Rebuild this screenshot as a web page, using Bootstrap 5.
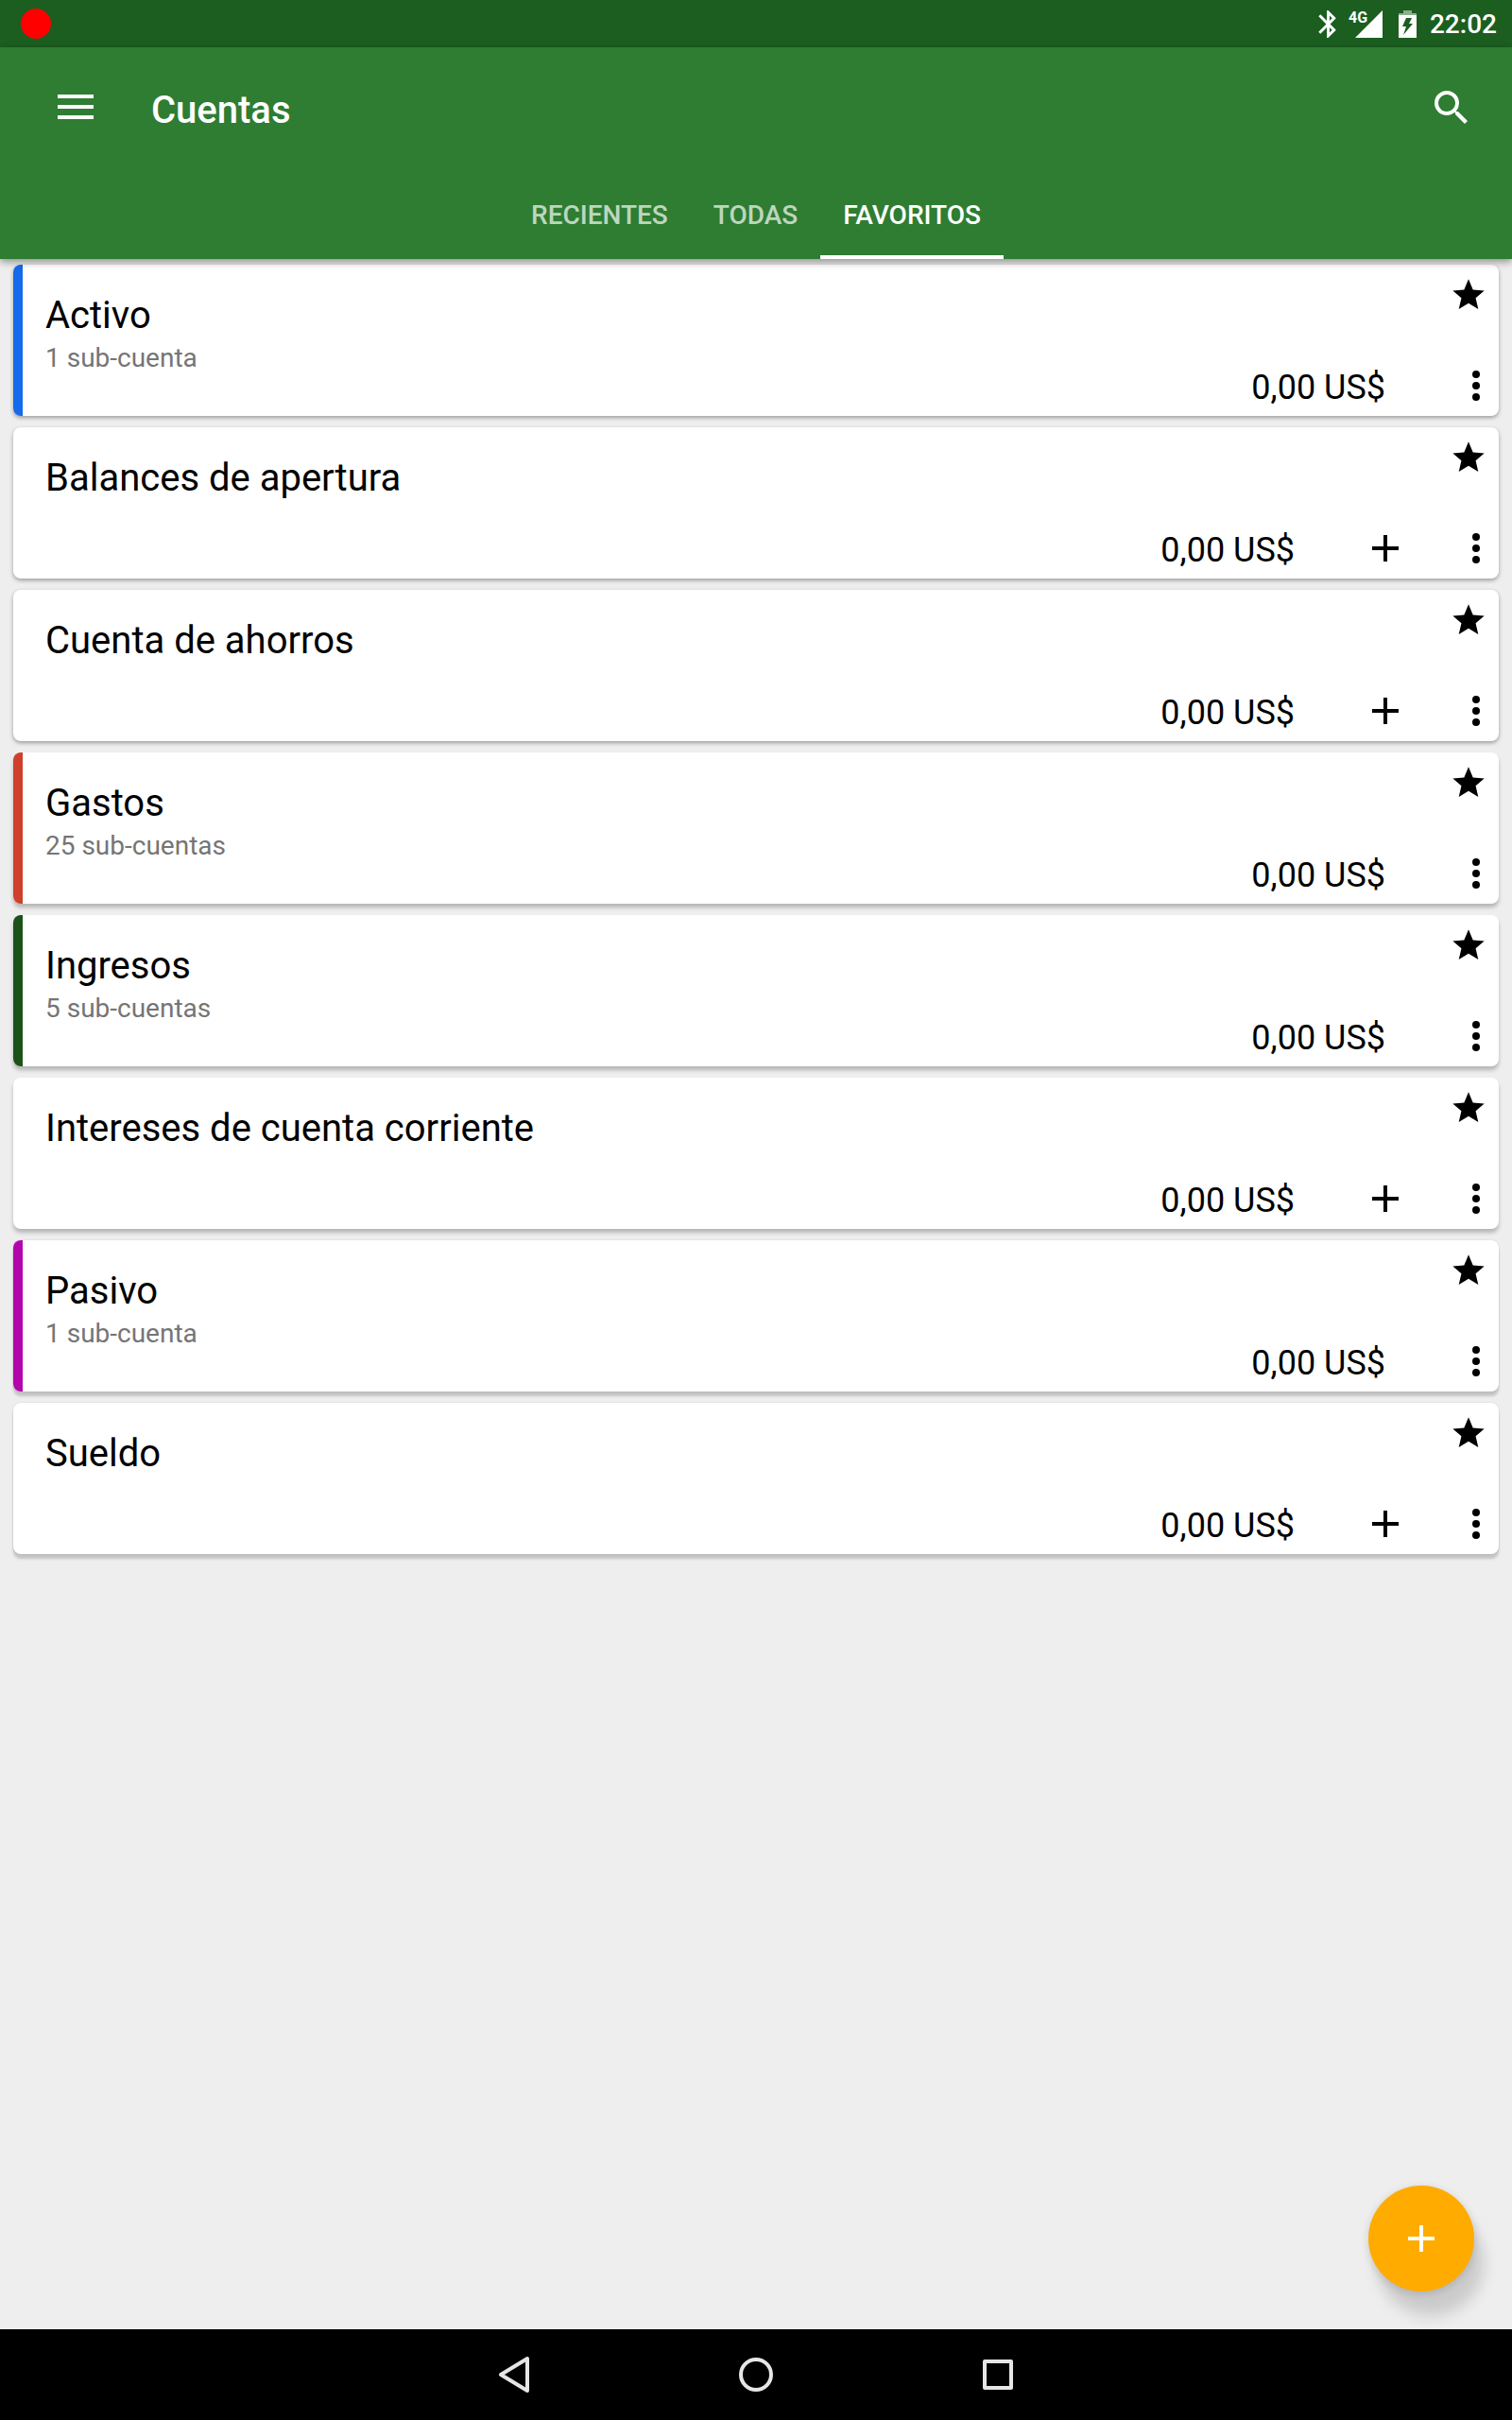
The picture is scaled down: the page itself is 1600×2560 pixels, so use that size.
<!DOCTYPE html>
<html lang="es">
<head>
<meta charset="utf-8">
<meta name="viewport" content="width=device-width, initial-scale=1">
<title>Cuentas</title>
<link href="https://cdn.jsdelivr.net/npm/bootstrap@5.3.0/dist/css/bootstrap.min.css" rel="stylesheet">
<style>
  body { font-family: Roboto, "Noto Sans", sans-serif; background: #eeeeee; color: #000; }
  svg { display: block; fill: currentColor; flex-shrink: 0; }
  .btn-plain { background: none; border: 0; padding: 0; color: inherit; display: block; }

  .status-bar { height: 50px; background: #1b5e20; color: #fff; padding: 0 16px 0 22px; }
  .rec-dot { width: 32px; height: 32px; background: #f00; }
  .clock { font-size: 28px; font-weight: 500; line-height: 50px; padding-top: 2px; margin-left: 14px; }
  .signal { width: 36px; margin: 0 17px 0 4px; }
  .signal-label { position: absolute; left: 0; top: 0; font-size: 16px; font-weight: 700; line-height: 15px; }

  .app-bar { background: #2e7d32; color: #fff; box-shadow: 0 3px 8px rgba(0,0,0,.4); z-index: 2; }
  .app-toolbar { height: 128px; padding: 0 40px 0 56px; }
  .app-title { font-size: 40px; font-weight: 500; line-height: 48px; margin: 6px 0 0 56px; }
  .app-tabs .nav-link { color: rgba(255,255,255,.7); font-size: 28px; font-weight: 500; line-height: 32px; padding: 34px 24px 26px; border: 0; border-bottom: 4px solid transparent; border-radius: 0; background: none; }
  .app-tabs .nav-link.active { color: #fff; border-color: #fff; background: none; }

  .account-list { padding: 6px 14px 12px; gap: 12px; }
  .account { min-height: 160px; border-radius: 8px; background: #fff; box-shadow: 0 2px 4px rgba(0,0,0,.35); }
  .account:nth-child(n+4) { box-shadow: 0 4px 4px rgba(0,0,0,.24); }
  .account:nth-child(n+7) { box-shadow: 0 5px 3px rgba(0,0,0,.18), 0 0 2px rgba(0,0,0,.14); }
  .account-stripe { width: 10px; border-radius: 8px 0 0 8px; }
  .account-body { padding: 28px 0 0 24px; }
  .account-name { font-size: 40px; font-weight: 400; line-height: 52px; margin: 0; }
  .account-sub { font-size: 28px; line-height: 38px; margin: 0; color: #757575; }
  .account-side { padding: 12px 0 6px; }
  .account-star { margin-right: 12px; }
  .account-amount { font-size: 36px; line-height: 48px; margin-right: 72px; padding-top: 4px; }
  .account-add { margin-right: 48px; }
  .stripe-blue { background: #1569eb; }
  .stripe-red { background: #d03f2b; }
  .stripe-green { background: #1c5117; }
  .stripe-purple { background: #b305ae; }

  .fab { position: absolute; right: 40px; bottom: 40px; width: 112px; height: 112px; background: #ffab00; color: #fff; box-shadow: 10px 26px 16px rgba(0,0,0,.15), 0 2px 10px rgba(0,0,0,.14); }
  .system-nav { height: 96px; background: #000; color: #e6e6e6; z-index: 2; }
  .system-nav .btn-plain { width: 256px; height: 96px; }
  .system-nav svg { fill: none; stroke: currentColor; stroke-width: 4; stroke-linejoin: round; }
</style>
</head>
<body class="d-flex flex-column min-vh-100">

<svg class="d-none" aria-hidden="true">
  <symbol id="i-star" viewBox="0 0 24 24"><path d="M12 17.27 18.18 21l-1.64-7.03L22 9.24l-7.19-.61L12 2 9.19 8.63 2 9.24l5.46 4.73L5.82 21z"/></symbol>
  <symbol id="i-more" viewBox="0 0 24 24"><circle cx="12" cy="6" r="2"/><circle cx="12" cy="12" r="2"/><circle cx="12" cy="18" r="2"/></symbol>
  <symbol id="i-add" viewBox="0 0 24 24"><path d="M19 13h-6v6h-2v-6H5v-2h6V5h2v6h6z"/></symbol>
</svg>

<div class="status-bar d-flex align-items-center">
  <span class="rec-dot rounded-circle me-auto"></span>
  <svg width="35" height="35" viewBox="0 0 24 24" aria-label="Bluetooth"><path d="M17.71 7.71 12 2h-1v7.59L6.41 5 5 6.41 10.59 12 5 17.59 6.41 19 11 14.41V22h1l5.71-5.71-4.3-4.29zM13 5.83l1.88 1.88L13 9.59zm1.88 10.46L13 18.17v-3.76z"/></svg>
  <div class="signal position-relative">
    <svg width="36" height="29" viewBox="0 0 36 29" aria-hidden="true"><path d="M36 0v29H7z"/></svg>
    <span class="signal-label">4G</span>
  </div>
  <svg width="19" height="29" viewBox="0 0 19 29" aria-label="Cargando"><path opacity=".5" d="M5 0h9v3h5v3H0V3h5z"/><path fill-rule="evenodd" d="M0 5h19v24H0zM8 8 4 17h4l-3 9L15 14h-4l3-6z"/></svg>
  <span class="clock">22:02</span>
</div>

<header class="app-bar position-relative">
  <div class="app-toolbar d-flex align-items-center">
    <button class="btn-plain" type="button" aria-label="Menú"><svg width="48" height="48" viewBox="0 0 48 48"><path d="M5 10h38v4H5zM5 21h38v4H5zM5 32h38v4H5z"/></svg></button>
    <h1 class="app-title">Cuentas</h1>
    <button class="btn-plain ms-auto" type="button" aria-label="Buscar"><svg width="48" height="48" viewBox="0 0 24 24"><path d="M15.5 14h-.79l-.28-.27A6.47 6.47 0 0 0 16 9.5 6.5 6.5 0 1 0 9.500 16c1.610 0 3.090-.59 4.230-1.570l.27.28v.79l5 4.990L20.490 19zm-6 0C7.010 14 5 11.990 5 9.500S7.010 5 9.500 5 14 7.010 14 9.500 11.990 14 9.500 14z"/></svg></button>
  </div>
  <nav class="app-tabs nav justify-content-center">
    <a class="nav-link" href="#recientes">RECIENTES</a>
    <a class="nav-link" href="#todas">TODAS</a>
    <a class="nav-link active" aria-current="page" href="#favoritos">FAVORITOS</a>
  </nav>
</header>

<main class="position-relative flex-grow-1">
  <div class="account-list d-flex flex-column" id="favoritos">

    <article class="account d-flex">
      <span class="account-stripe stripe-blue"></span>
      <div class="account-body flex-grow-1"><h2 class="account-name">Activo</h2><p class="account-sub">1 sub-cuenta</p></div>
      <div class="account-side d-flex flex-column justify-content-between align-items-end">
        <button class="btn-plain account-star" type="button" aria-label="Favorito"><svg width="40" height="40"><use href="#i-star"/></svg></button>
        <div class="d-flex align-items-center">
          <span class="account-amount">0,00 US$</span>
          <button class="btn-plain" type="button" aria-label="Más opciones"><svg width="48" height="48"><use href="#i-more"/></svg></button>
        </div>
      </div>
    </article>

    <article class="account d-flex">
      <span class="account-stripe"></span>
      <div class="account-body flex-grow-1"><h2 class="account-name">Balances de apertura</h2></div>
      <div class="account-side d-flex flex-column justify-content-between align-items-end">
        <button class="btn-plain account-star" type="button" aria-label="Favorito"><svg width="40" height="40"><use href="#i-star"/></svg></button>
        <div class="d-flex align-items-center">
          <span class="account-amount">0,00 US$</span>
          <button class="btn-plain account-add" type="button" aria-label="Añadir"><svg width="48" height="48"><use href="#i-add"/></svg></button>
          <button class="btn-plain" type="button" aria-label="Más opciones"><svg width="48" height="48"><use href="#i-more"/></svg></button>
        </div>
      </div>
    </article>

    <article class="account d-flex">
      <span class="account-stripe"></span>
      <div class="account-body flex-grow-1"><h2 class="account-name">Cuenta de ahorros</h2></div>
      <div class="account-side d-flex flex-column justify-content-between align-items-end">
        <button class="btn-plain account-star" type="button" aria-label="Favorito"><svg width="40" height="40"><use href="#i-star"/></svg></button>
        <div class="d-flex align-items-center">
          <span class="account-amount">0,00 US$</span>
          <button class="btn-plain account-add" type="button" aria-label="Añadir"><svg width="48" height="48"><use href="#i-add"/></svg></button>
          <button class="btn-plain" type="button" aria-label="Más opciones"><svg width="48" height="48"><use href="#i-more"/></svg></button>
        </div>
      </div>
    </article>

    <article class="account d-flex">
      <span class="account-stripe stripe-red"></span>
      <div class="account-body flex-grow-1"><h2 class="account-name">Gastos</h2><p class="account-sub">25 sub-cuentas</p></div>
      <div class="account-side d-flex flex-column justify-content-between align-items-end">
        <button class="btn-plain account-star" type="button" aria-label="Favorito"><svg width="40" height="40"><use href="#i-star"/></svg></button>
        <div class="d-flex align-items-center">
          <span class="account-amount">0,00 US$</span>
          <button class="btn-plain" type="button" aria-label="Más opciones"><svg width="48" height="48"><use href="#i-more"/></svg></button>
        </div>
      </div>
    </article>

    <article class="account d-flex">
      <span class="account-stripe stripe-green"></span>
      <div class="account-body flex-grow-1"><h2 class="account-name">Ingresos</h2><p class="account-sub">5 sub-cuentas</p></div>
      <div class="account-side d-flex flex-column justify-content-between align-items-end">
        <button class="btn-plain account-star" type="button" aria-label="Favorito"><svg width="40" height="40"><use href="#i-star"/></svg></button>
        <div class="d-flex align-items-center">
          <span class="account-amount">0,00 US$</span>
          <button class="btn-plain" type="button" aria-label="Más opciones"><svg width="48" height="48"><use href="#i-more"/></svg></button>
        </div>
      </div>
    </article>

    <article class="account d-flex">
      <span class="account-stripe"></span>
      <div class="account-body flex-grow-1"><h2 class="account-name">Intereses de cuenta corriente</h2></div>
      <div class="account-side d-flex flex-column justify-content-between align-items-end">
        <button class="btn-plain account-star" type="button" aria-label="Favorito"><svg width="40" height="40"><use href="#i-star"/></svg></button>
        <div class="d-flex align-items-center">
          <span class="account-amount">0,00 US$</span>
          <button class="btn-plain account-add" type="button" aria-label="Añadir"><svg width="48" height="48"><use href="#i-add"/></svg></button>
          <button class="btn-plain" type="button" aria-label="Más opciones"><svg width="48" height="48"><use href="#i-more"/></svg></button>
        </div>
      </div>
    </article>

    <article class="account d-flex">
      <span class="account-stripe stripe-purple"></span>
      <div class="account-body flex-grow-1"><h2 class="account-name">Pasivo</h2><p class="account-sub">1 sub-cuenta</p></div>
      <div class="account-side d-flex flex-column justify-content-between align-items-end">
        <button class="btn-plain account-star" type="button" aria-label="Favorito"><svg width="40" height="40"><use href="#i-star"/></svg></button>
        <div class="d-flex align-items-center">
          <span class="account-amount">0,00 US$</span>
          <button class="btn-plain" type="button" aria-label="Más opciones"><svg width="48" height="48"><use href="#i-more"/></svg></button>
        </div>
      </div>
    </article>

    <article class="account d-flex">
      <span class="account-stripe"></span>
      <div class="account-body flex-grow-1"><h2 class="account-name">Sueldo</h2></div>
      <div class="account-side d-flex flex-column justify-content-between align-items-end">
        <button class="btn-plain account-star" type="button" aria-label="Favorito"><svg width="40" height="40"><use href="#i-star"/></svg></button>
        <div class="d-flex align-items-center">
          <span class="account-amount">0,00 US$</span>
          <button class="btn-plain account-add" type="button" aria-label="Añadir"><svg width="48" height="48"><use href="#i-add"/></svg></button>
          <button class="btn-plain" type="button" aria-label="Más opciones"><svg width="48" height="48"><use href="#i-more"/></svg></button>
        </div>
      </div>
    </article>

  </div>
  <button class="fab btn-plain rounded-circle d-flex align-items-center justify-content-center" type="button" aria-label="Nueva cuenta"><svg width="48" height="48"><use href="#i-add"/></svg></button>
</main>

<footer class="system-nav position-relative d-flex justify-content-center">
  <button class="btn-plain" type="button" aria-label="Atrás"><svg class="mx-auto" width="48" height="48" viewBox="0 0 48 48"><path d="M38 7v34L10 24z"/></svg></button>
  <button class="btn-plain" type="button" aria-label="Inicio"><svg class="mx-auto" width="48" height="48" viewBox="0 0 48 48"><circle cx="24" cy="24" r="16"/></svg></button>
  <button class="btn-plain" type="button" aria-label="Recientes"><svg class="mx-auto" width="48" height="48" viewBox="0 0 48 48"><path d="M10 10h28v28H10z"/></svg></button>
</footer>

<script src="https://cdn.jsdelivr.net/npm/bootstrap@5.3.0/dist/js/bootstrap.bundle.min.js"></script>
</body>
</html>
